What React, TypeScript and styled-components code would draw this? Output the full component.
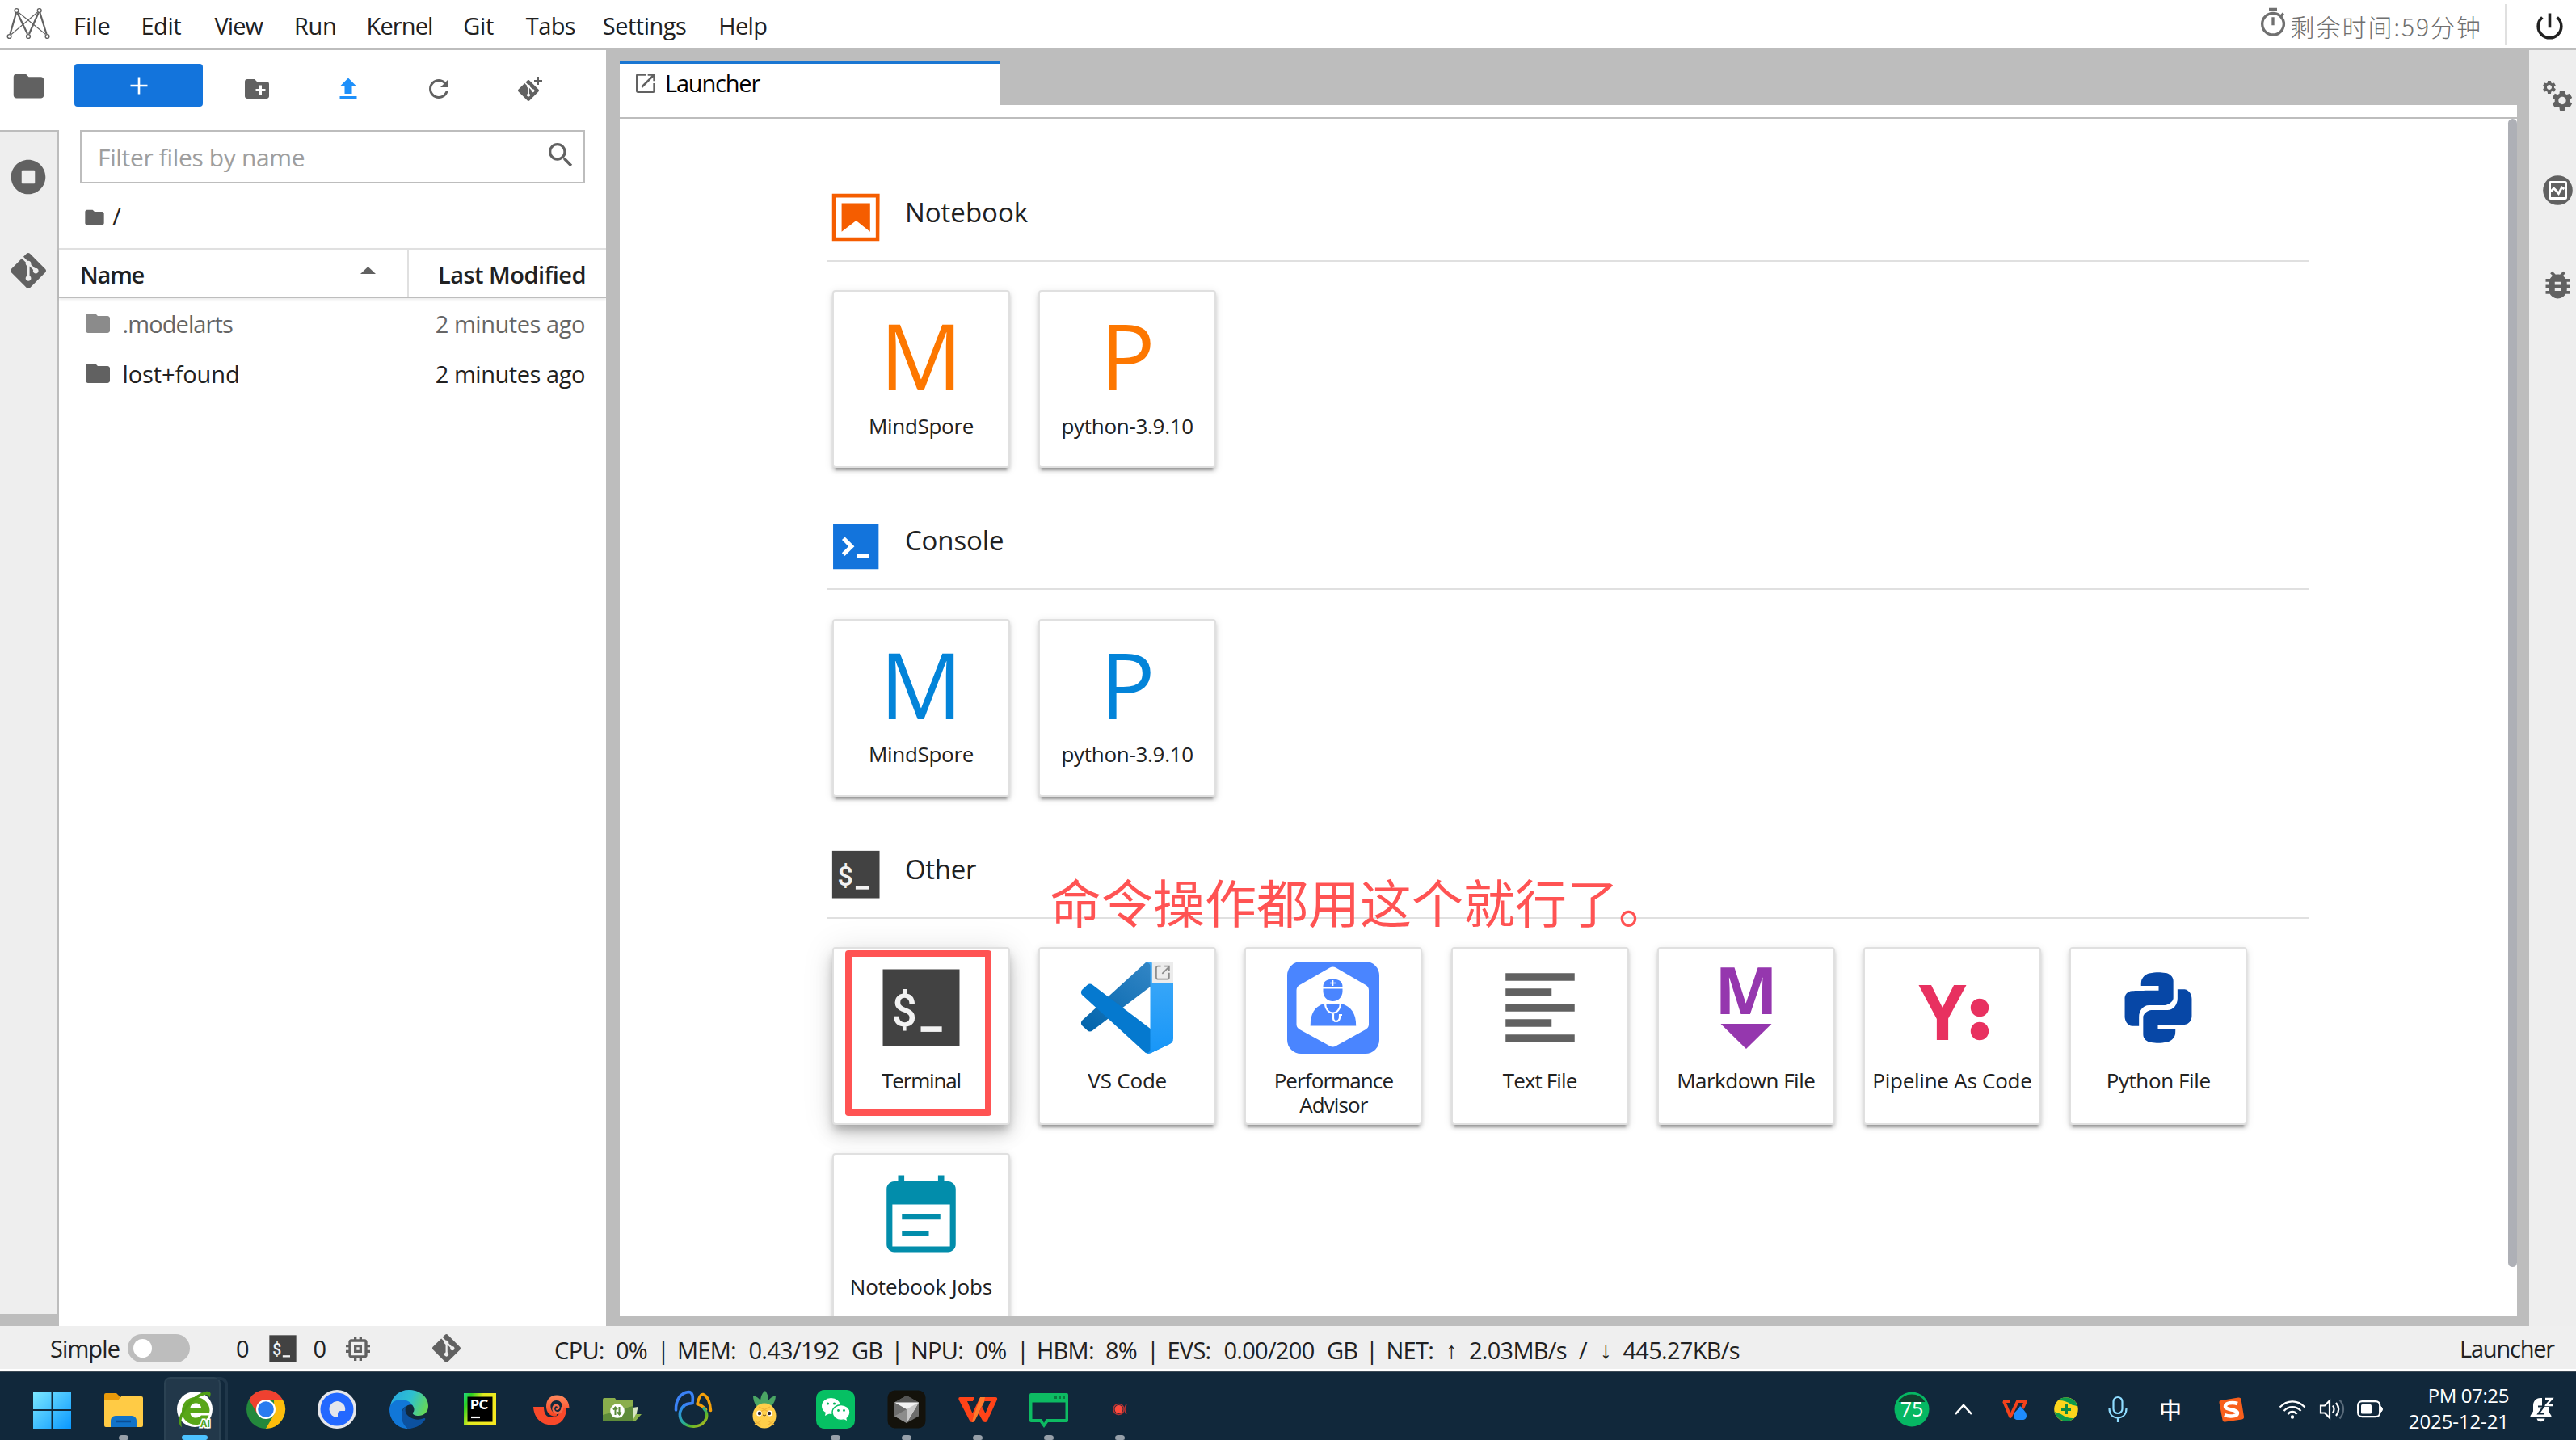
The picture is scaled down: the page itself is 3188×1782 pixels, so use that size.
import React from "react";
import styled, { createGlobalStyle, css } from "styled-components";
import {
  MdSearch,
  MdOutlineTimer,
  MdPowerSettingsNew,
  MdSettings,
  MdBugReport,
  MdMemory,
  MdOpenInNew,
} from "react-icons/md";
import { SiGit } from "react-icons/si";

const GREY = "#616161";
const LINE = "#bdbdbd";

const Global = createGlobalStyle`
  *, *::before, *::after { box-sizing: border-box; }
  body { margin: 0; background: #fff; }
  svg { display: block; flex: none; overflow: visible; }
`;

const Screen = styled.div`
  width: 3188px;
  height: 1782px;
  display: flex;
  flex-direction: column;
  overflow: hidden;
  background: #fff;
  color: #212121;
  font-family: "Open Sans", "Noto Sans CJK SC", sans-serif;
  font-size: 29px;
  line-height: 40px;
  white-space: nowrap;
`;

const Label = styled.span<{ $ls?: number }>`
  letter-spacing: ${(p) => p.$ls ?? 0}px;
`;

/* ---------- menu bar ---------- */

const MenuBar = styled.header`
  height: 62px;
  flex: none;
  display: flex;
  align-items: center;
  border-bottom: 2px solid ${LINE};
`;

const LogoBox = styled.div`
  width: 91px;
  height: 60px;
  flex: none;
`;

const MenuItem = styled.div<{ $w: number; $ls: number }>`
  width: ${(p) => p.$w}px;
  letter-spacing: ${(p) => p.$ls}px;
  padding-top: 3px;
`;

const TimeLeft = styled.div`
  margin-left: auto;
  display: flex;
  align-items: center;
  gap: 2px;
  color: #707070;
  font-family: "Noto Sans CJK SC", sans-serif;
  font-size: 30px;
  font-weight: 300;
  letter-spacing: 2px;
  svg {
    width: 40px;
    height: 40px;
    margin-top: -4px;
  }
  span {
    width: 240px;
    padding-top: 3px;
  }
`;

const PowerBox = styled.div`
  width: 88.5px;
  height: 51px;
  margin-left: 25px;
  padding: 6px 0 0 32px;
  border-left: 2px solid #e0e0e0;
  color: #212121;
  svg {
    width: 43px;
    height: 43px;
  }
`;

/* ---------- side bars ---------- */

const Work = styled.div`
  height: 1579px;
  flex: none;
  display: flex;
`;

const LeftBar = styled.nav`
  width: 73px;
  flex: none;
  display: flex;
  flex-direction: column;
  background: #eeeeee;
  color: ${GREY};
`;

const ActiveSideTab = styled.div`
  height: 99px;
  padding: 0 3px 11px 0;
  display: flex;
  align-items: center;
  justify-content: center;
  background: #fff;
`;

const SideTabs = styled.div`
  flex: 1;
  border-top: 2px solid ${LINE};
  border-right: 2px solid ${LINE};
`;

const SideSlot = styled.div`
  height: 116px;
  padding: 0 1px 4px 0;
  display: flex;
  align-items: center;
  justify-content: center;
`;

const SideFoot = styled.div`
  height: 15px;
  background: ${LINE};
`;

const RightBar = styled.nav`
  width: 58px;
  flex: none;
  background: #eeeeee;
  color: ${GREY};
  padding-left: 12px;
`;

const RightSlot = styled.div`
  height: 117px;
  padding-bottom: 4px;
  display: flex;
  align-items: center;
  justify-content: center;
`;

/* ---------- file browser ---------- */

const FilePanel = styled.aside`
  width: 677px;
  flex: none;
  background: #fff;
`;

const FileToolbar = styled.div`
  height: 99px;
  display: flex;
  padding: 17px 0 0 19px;
  color: ${GREY};
`;

const NewButton = styled.div`
  width: 159px;
  height: 53px;
  margin-right: 11px;
  border-radius: 4px;
  background: #1374dc;
  display: flex;
  align-items: center;
  justify-content: center;
`;

const ToolSlot = styled.div<{ $color?: string }>`
  width: 112.5px;
  height: 62px;
  display: flex;
  align-items: center;
  justify-content: center;
  color: ${(p) => p.$color ?? GREY};
`;

const FilterBox = styled.div`
  width: 625px;
  height: 66px;
  margin-left: 26px;
  padding: 0 8px 0 20px;
  border: 2px solid ${LINE};
  display: flex;
  align-items: center;
  justify-content: space-between;
  font-size: 30px;
  color: #9e9e9e;
  svg {
    width: 40px;
    height: 40px;
    color: ${GREY};
    margin-top: -5px;
  }
  span {
    padding-top: 2px;
  }
`;

const Crumbs = styled.div`
  height: 80px;
  padding: 2px 0 0 30px;
  display: flex;
  align-items: center;
  gap: 8px;
  color: ${GREY};
  svg {
    margin-top: 2px;
  }
  span {
    color: #212121;
  }
`;

const ListHead = styled.div`
  height: 62px;
  display: flex;
  border-top: 2px solid #e0e0e0;
  border-bottom: 2px solid ${LINE};
  box-shadow: 0 2px 3px rgba(0, 0, 0, 0.08);
  font-weight: 600;
`;

const NameHead = styled.div`
  width: 433px;
  padding: 4px 39px 0 26px;
  display: flex;
  align-items: center;
  justify-content: space-between;
  border-right: 2px solid #e0e0e0;
  svg {
    margin-top: -11px;
  }
`;

const DateHead = styled.div`
  flex: 1;
  padding: 4px 25px 0 0;
  display: flex;
  align-items: center;
  justify-content: flex-end;
`;

const FileRow = styled.div<{ $dim?: boolean }>`
  height: 62px;
  padding: 2px 26px 0 30px;
  display: flex;
  align-items: center;
  color: ${(p) => (p.$dim ? "#666" : "#212121")};
  svg {
    color: ${(p) => (p.$dim ? "#8b8b8b" : GREY)};
    margin: -2px 12.5px 0 0;
  }
  > :last-child {
    margin-left: auto;
  }
`;

/* ---------- main dock ---------- */

const Dock = styled.main`
  flex: 1;
  display: flex;
  flex-direction: column;
  padding: 13px 15px 13px 17px;
  background: ${LINE};
`;

const Tab = styled.div`
  width: 471px;
  height: 55px;
  flex: none;
  padding: 0 0 3px 16px;
  border-top: 4px solid #1976d2;
  background: #fff;
  color: #000;
  display: flex;
  align-items: center;
  gap: 8px;
  svg {
    width: 32px;
    height: 32px;
    margin-top: -1px;
    color: ${GREY};
  }
`;

const TabStrip = styled.div`
  height: 17px;
  flex: none;
  background: #fff;
  border-bottom: 2px solid ${LINE};
`;

const Body = styled.div`
  flex: 1;
  min-height: 0;
  display: flex;
  position: relative;
  overflow: hidden;
  background: #fff;
`;

const Sections = styled.div`
  width: 2337px;
  flex: none;
  padding: 76.5px 246px 0 257px;
`;

const ScrollThumb = styled.div`
  width: 11px;
  height: 1421px;
  border-radius: 6px;
  background: #aeb0b6;
`;

const Section = styled.section`
  margin-bottom: 51px;
`;

const SectionHead = styled.div`
  height: 100px;
  margin-bottom: 35.5px;
  padding-top: 10.5px;
  display: flex;
  gap: 25.5px;
  border-bottom: 2px solid #e0e0e0;
  font-size: 33px;
  span {
    padding-top: 8.5px;
  }
`;

const Cards = styled.div`
  display: flex;
  flex-wrap: wrap;
  gap: 35px 35.2px;
  padding-left: 6px;
`;

const Card = styled.div<{ $raised?: boolean }>`
  width: 220px;
  height: 220px;
  padding-top: 16px;
  display: flex;
  flex-direction: column;
  align-items: center;
  position: relative;
  border: 2px solid #e0e0e0;
  border-radius: 4px;
  background: #fff;
  ${(p) =>
    p.$raised
      ? css`
          box-shadow: 0 7px 11px -2px rgba(0, 0, 0, 0.24), 0 13px 22px rgba(0, 0, 0, 0.14), 0 2px 40px rgba(0, 0, 0, 0.1);
        `
      : css`
          box-shadow: 0 7px 2px -4px rgba(0, 0, 0, 0.22), 0 4px 4px rgba(0, 0, 0, 0.16), 0 2px 11px rgba(0, 0, 0, 0.1);
        `}
`;

const CardLabel = styled.div<{ $ls: number }>`
  margin-top: 17.5px;
  font-size: 26px;
  line-height: 30px;
  text-align: center;
  letter-spacing: ${(p) => p.$ls}px;
  white-space: pre;
`;

const Initial = styled.div<{ $color: string }>`
  height: 117px;
  font-size: 114px;
  line-height: 123px;
  color: ${(p) => p.$color};
`;

const Highlight = styled.div`
  position: absolute;
  left: 14px;
  top: 2px;
  width: 181px;
  height: 205px;
  border: 8px solid #ff5353;
  border-radius: 4px;
`;

const Annotation = styled.div`
  position: absolute;
  left: 532px;
  top: 935px;
  font-family: "Noto Sans CJK SC", sans-serif;
  font-size: 64px;
  line-height: 64px;
  color: #ff5353;
`;

/* ---------- status bar ---------- */

const Status = styled.footer`
  height: 57px;
  flex: none;
  display: flex;
  align-items: center;
  padding: 0 27px 0 62px;
  background: #efefef;
  border-bottom: 2px solid #3c4a55;
  box-shadow: inset 0 -2px 0 #fff;
  color: #212121;
`;

const Toggle = styled.div`
  width: 77px;
  height: 35px;
  margin: 0 57px 0 10px;
  padding: 6px 7px;
  border-radius: 18px;
  background: #bdbdbd;
  &::before {
    content: "";
    display: block;
    width: 23px;
    height: 23px;
    border-radius: 50%;
    background: #fff;
  }
`;

const StatusIcon = styled.div<{ $l: number; $r: number }>`
  margin: 0 ${(p) => p.$r}px 0 ${(p) => p.$l}px;
  color: ${GREY};
`;

const Metrics = styled.div`
  display: flex;
  padding-top: 4px;
`;

const Metric = styled.span<{ $w: number; $arrow?: boolean }>`
  width: ${(p) => p.$w}px;
  flex: none;
  letter-spacing: -0.7px;
  ${(p) =>
    p.$arrow &&
    css`
      font-family: "Liberation Sans", sans-serif;
    `}
`;

const StatusEnd = styled.span`
  margin-left: auto;
  letter-spacing: -1.2px;
`;

/* ---------- taskbar ---------- */

const Taskbar = styled.div`
  height: 84px;
  flex: none;
  display: flex;
  justify-content: space-between;
  padding: 0 3px 0 21px;
  background: #11283b;
  color: #fff;
`;

const Apps = styled.div`
  display: flex;
`;

const AppSlot = styled.div<{ $active?: boolean }>`
  width: 88.1px;
  height: 84px;
  flex: none;
  padding-top: 22px;
  display: flex;
  flex-direction: column;
  align-items: center;
  gap: 8px;
  position: relative;
  svg {
    width: 48px;
    height: 48px;
    position: relative;
  }
  ${(p) =>
    p.$active &&
    css`
      &::before,
      &::after {
        content: "";
        position: absolute;
        top: 6px;
        bottom: 0;
        border-radius: 8px 8px 0 0;
      }
      &::before {
        left: 6px;
        width: 70px;
        background: #22384a;
        border: 2px solid #2b4253;
        border-bottom: 0;
      }
      &::after {
        left: 72px;
        width: 13px;
        border: 4px solid #20374a;
        border-left: 0;
        border-bottom: 0;
        border-radius: 0 9px 0 0;
      }
    `}
`;

const Dot = styled.div<{ $active?: boolean }>`
  width: ${(p) => (p.$active ? 32 : 12)}px;
  height: 6px;
  border-radius: ${(p) => (p.$active ? "3px" : "5px 5px 3px 3px")};
  background: ${(p) => (p.$active ? "#4cc2ff" : "#97a0a9")};
  position: relative;
`;

const Tray = styled.div`
  display: flex;
`;

const TraySlot = styled.div<{ $w: number }>`
  width: ${(p) => p.$w}px;
  padding-top: 8px;
  display: flex;
  align-items: center;
  justify-content: center;
`;

const Ime = styled.span`
  font-family: "Noto Sans CJK SC", sans-serif;
  font-size: 28px;
  font-weight: 500;
`;

const Clock = styled.div`
  width: 137px;
  padding-top: 13px;
  display: flex;
  flex-direction: column;
  align-items: flex-end;
  font-size: 24px;
  line-height: 32px;
`;

/* ---------- icons ---------- */

const FolderIcon = ({ s }: { s: number }) => (
  <svg width={s} height={s} viewBox="0 0 24 24" fill="currentColor">
    <path d="M10 4H4c-1.1 0-1.99.9-1.99 2L2 18c0 1.1.9 2 2 2h16c1.1 0 2-.9 2-2V8c0-1.1-.9-2-2-2h-8l-2-2z" />
  </svg>
);

const TerminalIcon = ({ s }: { s: number }) => (
  <svg width={s} height={s} viewBox="0 0 24 24">
    <rect x="2" y="2" width="20" height="20" fill="#424242" />
    <text x="4.3" y="16.8" fontFamily="Roboto" fontWeight="500" fontSize="11.6" fill="#f2f2f2">$</text>
    <rect x="11.9" y="16.9" width="5.5" height="1.4" fill="#f2f2f2" />
  </svg>
);

const NotebookIcon = () => (
  <svg width="70.4" height="70.4" viewBox="0 0 22 22" fill="#f55d00">
    <path d="M18.7 3.3v15.4H3.3V3.3h15.4m1.5-1.5H1.8v18.3h18.3l.1-18.3z" />
    <path d="M16.5 16.5l-5.4-4.3-5.6 4.3v-11h11z" />
  </svg>
);

const ConsoleIcon = () => (
  <svg width="70.4" height="70.4" viewBox="0 0 200 200">
    <path fill="#1374dc" d="M20 19.8h160v159.9H20z" />
    <path fill="#fff" d="M105 127.3h40v12.8h-40zM51.1 77L74 99.9l-23.3 23.3 10.5 10.5 23.3-23.3L95 99.9 84.5 89.4 61.6 66.5z" />
  </svg>
);

const Logo = () => (
  <svg width="70" height="60" viewBox="0 0 70 60" fill="none" stroke="#616161">
    <path d="M12.5 42L20 16M21.5 16L34 42M36 42L47.5 16M49.5 16L57.5 42" strokeWidth="2.2" />
    <path d="M14 42.5L46.5 15M22.5 15L56.5 42.5" strokeWidth="1.1" />
    <g fill="#fff" strokeWidth="1.4">
      <circle cx="20.5" cy="13" r="2.4" />
      <circle cx="48.7" cy="13" r="2.4" />
      <circle cx="11.6" cy="45" r="2.4" />
      <circle cx="35" cy="45" r="2.4" />
      <circle cx="58.5" cy="45" r="2.4" />
    </g>
  </svg>
);

const VsCodeIcon = () => (
  <svg width="114" height="114" viewBox="0 0 100 100">
    <defs>
      <linearGradient id="vsBack" x1="0" y1="1" x2="1" y2="0">
        <stop offset="0" stopColor="#0063ab" />
        <stop offset="1" stopColor="#3a8bc9" />
      </linearGradient>
      <linearGradient id="vsFront" x1="0" y1="0" x2="0" y2="1">
        <stop offset="0" stopColor="#40aaf8" />
        <stop offset="1" stopColor="#1796f8" />
      </linearGradient>
    </defs>
    <path fill="url(#vsBack)" d="M96.4614 10.7962L75.8569 0.875542C73.4719 -0.272773 70.6217 0.211611 68.75 2.08333L1.29858 63.5832C-0.515693 65.2373 -0.513607 68.0937 1.30308 69.7452L6.81272 74.754C8.29793 76.1042 10.5347 76.2036 12.1338 74.9905L93.3609 13.3699C96.086 11.3026 100 13.2462 100 16.6667V16.4275C100 14.0265 98.6246 11.8378 96.4614 10.7962Z" />
    <path fill="#0579cf" d="M96.4614 89.2038L75.8569 99.1245C73.4719 100.273 70.6217 99.7884 68.75 97.9167L1.29858 36.4169C-0.515693 34.7627 -0.513607 31.9063 1.30308 30.2548L6.81272 25.246C8.29793 23.8958 10.5347 23.7964 12.1338 25.0095L93.3609 86.6301C96.086 88.6974 100 86.7538 100 83.3333V83.5725C100 85.9735 98.6246 88.1621 96.4614 89.2038Z" />
    <path fill="url(#vsFront)" d="M75.8578 99.1263C73.4721 100.274 70.6219 99.7885 68.75 97.9166C71.0564 100.223 75 98.5895 75 95.3278V4.67213C75 1.41039 71.0564 -0.223106 68.75 2.08329C70.6219 0.211402 73.4721 -0.273666 75.8578 0.873633L96.4587 10.7807C98.6234 11.8217 100 14.0112 100 16.4132V83.5871C100 85.9891 98.6234 88.1786 96.4586 89.2196L75.8578 99.1263Z" />
    <rect x="77" y="0" width="23" height="23" fill="#ececec" />
    <path d="M86.5 5h-3a2 2 0 0 0-2 2v10a2 2 0 0 0 2 2h10a2 2 0 0 0 2-2v-5M88 13l7-7M90.5 5h5v5" fill="none" stroke="#8a8a8a" strokeWidth="1.5" />
  </svg>
);

const AdvisorIcon = () => (
  <svg width="114" height="114" viewBox="0 0 114 114">
    <rect width="114" height="114" rx="17" fill="#4a85ff" />
    <path d="M56.5 14L93.5 35.5V77.5L56.5 98L19 77.5V35.5Z" fill="#fff" stroke="#fff" strokeWidth="15" strokeLinejoin="round" />
    <g fill="#4a85ff">
      <path d="M44.5 31c0-6 4-9.5 12-9.5s12 3.5 12 9.5z" />
      <path d="M44.5 33.5h24v3c0 8-6 12.5-12 12.5s-12-4.5-12-12.5z" />
      <path d="M28.7 79.5c0-15 5-24 17-27.5h21c13 3.5 18.5 12.5 18.5 27.5z" />
    </g>
    <path d="M56.5 23v7M53 26.5h7" stroke="#fff" strokeWidth="1.6" />
    <path d="M47 51c0 7 4 12.5 9.5 12.5S66 58 66 51M57 63.5v6c0 6 7 6 8 0v-3M64 66h4" fill="none" stroke="#fff" strokeWidth="2.2" />
  </svg>
);

const TextIcon = () => (
  <svg width="114" height="114" viewBox="0 0 24 24" fill={GREY}>
    <path d="M15 15H3v2h12v-2zm0-8H3v2h12V7zM3 13h18v-2H3v2zm0 8h18v-2H3v2zM3 3v2h18V3H3z" />
  </svg>
);

const MarkdownIcon = () => (
  <svg width="114" height="114" viewBox="0 0 114 114" fill="#9537ae">
    <text x="57" y="64.5" textAnchor="middle" fontFamily="Open Sans" fontWeight="700" fontSize="81" textLength="78" lengthAdjust="spacingAndGlyphs">M</text>
    <path d="M25.5 77h63L57 108z" />
  </svg>
);

const PipelineIcon = () => (
  <svg width="114" height="114" viewBox="0 0 114 114" fill="#e83160">
    <text x="15.5" y="97" fontFamily="Open Sans" fontWeight="700" fontSize="95" textLength="59" lengthAdjust="spacingAndGlyphs">Y</text>
    <circle cx="91" cy="57" r="11.2" />
    <circle cx="91" cy="86" r="11.2" />
  </svg>
);

const PythonIcon = () => (
  <svg width="114" height="114" viewBox="0 0 22 22" fill="#0747a6">
    <path d="M11.1 6.9V5.8H6.9c0-.5 0-1.3.2-1.6.4-.7.8-1.1 1.7-1.4 1.7-.3 2.5-.3 3.9-.1 1 .1 1.9.9 1.9 1.9v4.2c0 .5-.9 1.6-2 1.6H8.8c-1.5 0-2.4 1.4-2.4 2.8v2.2H4.7C3.5 15.1 3 14 3 13.1V9c-.1-1 .6-2 1.8-2 1.5-.1 6.3-.1 6.3-.1z" />
    <path d="M10.9 15.1v1.1h4.2c0 .5 0 1.3-.2 1.6-.4.7-.8 1.1-1.7 1.4-1.7.3-2.5.3-3.9.1-1-.1-1.9-.9-1.9-1.9v-4.2c0-.5.9-1.6 2-1.6h3.8c1.5 0 2.4-1.4 2.4-2.8V6.6h1.7C18.5 6.8 19 8 19 8.9V13c0 1-.7 2.1-1.9 2.1h-6.2z" />
  </svg>
);

const JobsIcon = () => (
  <svg width="114" height="114" viewBox="0 0 24 24" fill="#028dab">
    <path d="M19 3.6h-1V2h-1.6v1.6H7.6V2H6v1.6H5c-1.1 0-2 .9-2 2V20c0 1.1.9 2 2 2h14c1.1 0 2-.9 2-2V5.6c0-1.1-.9-2-2-2zm.5 16.9h-15V9.6h15z" />
    <path d="M7 12h10v1.5H7zM7 16.4h7v1.5H7z" />
  </svg>
);

const MonitorIcon = () => (
  <svg width="37" height="37" viewBox="0 0 37 37">
    <circle cx="18.5" cy="18.5" r="18.3" fill={GREY} />
    <rect x="8.5" y="8.5" width="20" height="20" rx="1" fill="none" stroke="#fff" strokeWidth="3" />
    <path d="M10 20l3.5-4 3 3 3 3.5 4-7.5 3 2" fill="none" stroke="#fff" strokeWidth="2.8" />
  </svg>
);

const GearsIcon = () => (
  <svg width="37" height="37" viewBox="0 0 37 37">
    <MdSettings x={-2} y={-2} size={20} />
    <MdSettings x={8.5} y={9} size={31} />
  </svg>
);

/* ---------- taskbar icons ---------- */

const WindowsIcon = () => (
  <svg viewBox="0 0 48 48">
    <defs>
      <linearGradient id="win" x1="0" y1="0" x2="1" y2="1">
        <stop offset="0" stopColor="#7ce8ff" />
        <stop offset="1" stopColor="#0a98ff" />
      </linearGradient>
    </defs>
    <path fill="url(#win)" d="M0 2h22.5v22H0zM24.5 2H47v22H24.5zM0 26h22.5v22H0zM24.5 26H47v22H24.5z" />
  </svg>
);

const ExplorerIcon = () => (
  <svg viewBox="0 0 48 48">
    <path d="M0 6a2 2 0 0 1 2-2h13l5 5v8H0z" fill="#e99a0a" />
    <path d="M0 13h17l4-5h25a2 2 0 0 1 2 2v34a2 2 0 0 1-2 2H2a2 2 0 0 1-2-2z" fill="#ffcb45" />
    <path d="M8 46V38a6 6 0 0 1 6-6h20a6 6 0 0 1 6 6v8z" fill="#1173c9" />
    <path d="M15 39h18" stroke="#0a4e94" strokeWidth="2.5" />
  </svg>
);

const Browser360Icon = () => (
  <svg viewBox="0 0 48 48">
    <circle cx="24" cy="24" r="22" fill="#fff" />
    <path fillRule="evenodd" d="M42 28.5H18.5c.5 4 3 6 7 6 3 0 5-1 6.5-3h9.5c-2.5 7-8.5 11.5-16 11.5C15.5 43 8 36 8 26S15.5 9 25 9s17.5 7.5 17.5 16.5zM18.5 22H32c-.5-3.5-3-5.5-6.5-5.5s-6.500 2-7 5.500z" fill="#58a618" />
    <path d="M5 42C2 34 12 16 26 7 34 2 42 0 43.5 4c.5 2-.5 4-1.5 6 0-4-3-5-8-3C20 12 4 32 8 46c-1.500-1-2.500-2.500-3-4z" fill="#4f9e14" />
    <text x="31" y="46" fontFamily="Open Sans" fontWeight="700" fontSize="12" fill="#58a618" stroke="#fff" strokeWidth="3" paintOrder="stroke">AI</text>
  </svg>
);

const ChromeIcon = () => (
  <svg viewBox="0 0 48 48">
    <circle cx="24" cy="24" r="24" fill="#23883c" />
    <path d="M3.2 12A24 24 0 0 1 44.8 12H24L13.6 30z" fill="#ef4130" />
    <path d="M44.8 12A24 24 0 0 1 24 48L34.4 30 34 12z" fill="#fdbd0b" />
    <circle cx="24" cy="24" r="12" fill="#fff" />
    <circle cx="24" cy="24" r="9.8" fill="#2a7cf0" />
  </svg>
);

const QuarkIcon = () => (
  <svg viewBox="0 0 48 48">
    <circle cx="24" cy="24" r="24" fill="#e6e6ea" />
    <circle cx="24" cy="24" r="20.5" fill="#2368ff" />
    <path d="M24 14a10 10 0 1 0 1 20v-4a4 4 0 0 1 4-4h5A10 10 0 0 0 24 14z" fill="#e4e6ec" />
  </svg>
);

const EdgeIcon = () => (
  <svg viewBox="0 0 48 48">
    <defs>
      <linearGradient id="edgeTop" x1="0" y1="0.3" x2="1" y2="0.6">
        <stop offset="0" stopColor="#27a9e0" />
        <stop offset="0.5" stopColor="#2ec0d0" />
        <stop offset="1" stopColor="#66d855" />
      </linearGradient>
    </defs>
    <path d="M1 20C3 8 12 0 24 0c14 0 24 9 24 20 0 8-6 12-12 12-5 0-8-2-7-4 2-2 2-5 0-8-2-4-8-6-14-6-7 0-12 3-14 6z" fill="url(#edgeTop)" />
    <path d="M0 24c0-7 6-12 14-12 8 0 14 4 15 9-3-3-9-2-12 2-3 6-2 15 6 25C10 48 0 38 0 24z" fill="#1177d8" />
    <path d="M17 24c2-4 6-5 9-4-2 2-2 5-1 8 2 7 10 9 18 7 1.5 0 1.5 1 1 2-5 7-13 11-21 11-8-6-10-16-6-24z" fill="#0c519f" />
    <path d="M29 21c0-3-3-3.5-6-2-5 3-4 10 0 13 5 5 14 6 19 3-6 1-13-1-14-6 0-2 1.5-3 1-8z" fill="#11283b" />
  </svg>
);

const PyCharmIcon = () => (
  <svg viewBox="0 0 48 48">
    <defs>
      <linearGradient id="pc" x1="0" y1="0" x2="1" y2="0.5">
        <stop offset="0" stopColor="#21d789" />
        <stop offset="0.2" stopColor="#2bd020" />
        <stop offset="0.5" stopColor="#e0ea20" />
        <stop offset="1" stopColor="#f5e820" />
      </linearGradient>
    </defs>
    <rect x="4" y="4" width="40" height="40" fill="url(#pc)" />
    <rect x="8.5" y="8.5" width="31" height="31" fill="#000" />
    <text x="12" y="24" fontFamily="Lato" fontWeight="900" fontSize="16" fill="#fff" textLength="22" lengthAdjust="spacingAndGlyphs">PC</text>
    <path d="M13 34h11" stroke="#fff" strokeWidth="2.2" />
  </svg>
);

const NautilusIcon = () => (
  <svg viewBox="0 0 48 48">
    <defs>
      <linearGradient id="nau" x1="0.5" y1="0" x2="0.5" y2="1">
        <stop offset="0" stopColor="#ff8a5e" />
        <stop offset="1" stopColor="#f6401f" />
      </linearGradient>
    </defs>
    <path d="M2 21h13c0 8 3 13 9 13 7 0 12-4 13-12h6c0 13-7 21.5-18 21.5C12 43.5 3 35 2 21z" fill="#f8492a" />
    <path d="M46.5 22H38c0-6-3-9-7.5-9-5 0-7.5 4-7 8.5.5 5 4 7.5 8 7l-1 4c-7 1-12.5-4-12.5-12C18 12 23 6.5 31 6.5c9 0 15 6 15.5 15.5z" fill="url(#nau)" />
    <path d="M38 21c0 5-3 8-6.5 7.5-4-.5-5.5-4-4.5-7s5-3.5 6-1-1.5 3.5-2.5 2.5" fill="none" stroke="#f4694a" strokeWidth="2.8" />
  </svg>
);

const FolderSyncIcon = () => (
  <svg viewBox="0 0 48 48">
    <path d="M37 22l6.5-1-3.5 18h-3z" fill="#d8e6c4" />
    <path d="M37 38l4-8h7l-8 9z" fill="#8ab24a" />
    <path d="M0 12a2 2 0 0 1 2-2h13l2 3h20v26H0z" fill="#8aae4c" />
    <path d="M0 31L37 20v19H0z" fill="#5f8c3a" />
    <circle cx="18" cy="26" r="8.8" fill="#fff" />
    <path d="M15.5 31V22M13 24.5l2.5-3 2.5 3M20.5 21v9M18 27.5l2.5 3 2.5-3" stroke="#5a8a3a" strokeWidth="2" fill="none" />
  </svg>
);

const NavIcon = () => (
  <svg viewBox="0 0 48 48" fill="none" strokeWidth="3.6" strokeLinecap="round" strokeLinejoin="round">
    <defs>
      <linearGradient id="navBase" x1="0" y1="0" x2="1" y2="1">
        <stop offset="0" stopColor="#2f86ff" />
        <stop offset="0.5" stopColor="#28b090" />
        <stop offset="0.7" stopColor="#5cb82a" />
        <stop offset="1" stopColor="#d0b81c" />
      </linearGradient>
    </defs>
    <path d="M2.5 25C2 13 8 3.5 18 2.5c5 0 6 5 5 14-6 .5-8.5 1-11 4" stroke="#3b82f6" />
    <path d="M29 17.5c2-9 4-12.5 7-12 6 2 9 11 9.5 20M29 17.5c4 1 8 4 10.5 7" stroke="#f5a00a" />
    <path d="M12 20c-6 6-6 14-1 20 7 7 21 7 27-1 5-7 2-13-1-16" stroke="url(#navBase)" />
  </svg>
);

const PineappleIcon = () => (
  <svg viewBox="0 0 48 48">
    <path d="M14 20c-3-5-4-9-4-13 4 1 7 3 9 6 1-6 2-9 6-12 3 4 4 7 4 12 2-3 5-5 9-6 0 5-2 9-5 13z" fill="#4aa564" />
    <ellipse cx="24" cy="32" rx="14.5" ry="15.5" fill="#ffcf4a" />
    <path d="M17 21l12 6M31 21l-12 6M12 38l8 6M20 38l-8 5M28 44l8-6M28 38l8 5" stroke="#f0b43a" strokeWidth="1.3" />
    <ellipse cx="17.5" cy="29" rx="3.3" ry="3.6" fill="#fff" />
    <ellipse cx="30.5" cy="29" rx="3.3" ry="3.6" fill="#fff" />
    <circle cx="18" cy="29" r="2.2" fill="#2c2430" />
    <circle cx="30" cy="29" r="2.2" fill="#2c2430" />
    <path d="M22 31q2 2 4 0" stroke="#6a4a20" fill="none" />
  </svg>
);

const WeChatIcon = () => (
  <svg viewBox="0 0 48 48">
    <rect width="48" height="48" rx="10" fill="#06c063" />
    <ellipse cx="18.5" cy="20" rx="11.5" ry="10" fill="#fff" />
    <path d="M12 27l-1 5 6-3z" fill="#fff" />
    <ellipse cx="31" cy="28" rx="11" ry="9.5" fill="#fff" stroke="#06c063" strokeWidth="1.5" />
    <path d="M34 36l4 2-1-5z" fill="#fff" />
    <g fill="#06b45c">
      <circle cx="14.5" cy="17" r="1.6" />
      <circle cx="22.5" cy="17" r="1.6" />
      <circle cx="27.5" cy="25.5" r="1.4" />
      <circle cx="34.5" cy="25.5" r="1.4" />
    </g>
  </svg>
);

const CursorIcon = () => (
  <svg viewBox="0 0 48 48">
    <rect x="0.5" y="0.5" width="47" height="47" rx="9" fill="#14120b" />
    <path d="M24 7l15 8.5v17L24 41 9 32.5v-17z" fill="#6d6d6c" />
    <path d="M9 32.5L24 24v17z" fill="#8c8c8b" />
    <path d="M24 7l15 8.5H9z" fill="#555554" />
    <path d="M9 15.5h30L24 41V24z" fill="#f2f2f2" />
    <path d="M39 15.5L24 24v17z" fill="#c8c8c8" />
  </svg>
);

const WpsIcon = () => (
  <svg viewBox="0 0 48 48">
    <path d="M2 9h18l-2 5h-7l6.5 15L26 11c1-1.5 2-2 4-2h4L20 38c-1 2.5-5 2.5-6 0L.5 12C0 10 .5 9 2 9z" fill="#ff4318" />
    <path d="M27 9h8L21 37c-1 2-2 3-4 3l2-8z" fill="#ff7a2c" />
    <path d="M33 9h13c2 0 2.5 1.5 2 3L36 38c-1 2.5-4.5 2.5-6 0l-5-9 4-9 4.5 9L40 14h-8z" fill="#ff4318" />
  </svg>
);

const ScreenChatIcon = () => (
  <svg viewBox="0 0 48 48">
    <path d="M2 4h44a2 2 0 0 1 2 2v32a2 2 0 0 1-2 2H23l-5 7-5-7H2a2 2 0 0 1-2-2V6a2 2 0 0 1 2-2z" fill="#0dbb62" />
    <path d="M3.5 15.5h41V36H20.5l-2.5 5-2.5-5h-12z" fill="#11283b" />
    <path d="M31 9.5h3M36 9.5h3M41 9.5h3" stroke="#0a7a40" strokeWidth="3" />
  </svg>
);

const RecordIcon = () => (
  <svg viewBox="0 0 48 48">
    <circle cx="22.5" cy="24" r="6.5" fill="none" stroke="#b43232" strokeWidth="1.5" />
    <circle cx="22.5" cy="24" r="5" fill="#ff4a3c" />
    <path d="M32 18q-4 6 0 12" stroke="#b43232" strokeWidth="1.5" fill="none" />
  </svg>
);

/* ---------- tray icons ---------- */

const BadgeIcon = () => (
  <svg width="44" height="44" viewBox="0 0 44 44">
    <circle cx="22" cy="22" r="21.5" fill="#06b763" />
    <path d="M5.5 13a19 19 0 0 1 33 0z" fill="#12402f" />
    <text x="22" y="31" textAnchor="middle" fontFamily="Open Sans" fontSize="25" fill="#fff">75</text>
  </svg>
);

const ChevronIcon = () => (
  <svg width="22" height="14" viewBox="0 0 22 14" fill="none" stroke="#fff" strokeWidth="2.6">
    <path d="M1 13L11 2l10 11" />
  </svg>
);

const WpsCloudIcon = () => (
  <svg width="32" height="26" viewBox="0 0 32 26" fill="none">
    <path d="M2 3h9M3 3l8 19L20 3h10L26 12" stroke="#f4421c" strokeWidth="4" strokeLinejoin="round" />
    <path d="M23 9c5 5 8 8 8 12 0 3-2 5-5 5h-6c-3 0-5-2-5-5 0-5 5-6 8-12z" fill="#1e8cff" />
  </svg>
);

const ShieldIcon = () => (
  <svg width="30" height="30" viewBox="0 0 30 30">
    <circle cx="15" cy="15" r="14.8" fill="#fbd51c" />
    <path d="M5 4A15 15 0 0 1 29.5 13c-2-4-6-2-9-4.5C16 5 10 3.5 5 4zM25 26A15 15 0 0 1 .5 17c2 4 6 2 9 4.5C14 25 20 26.5 25 26z" fill="#0d9a4b" />
    <path d="M15 9v12M9 15h12" stroke="#0d8a43" strokeWidth="4" />
  </svg>
);

const MicIcon = () => (
  <svg width="24" height="33" viewBox="0 0 24 33" fill="none" stroke="#8fdcff" strokeWidth="2.2">
    <rect x="6.5" y="1" width="11" height="20" rx="5.5" />
    <path d="M1.5 15c0 7 4 11.5 10.5 11.5S22.5 22 22.5 15M12 26.5V32" />
  </svg>
);

const SogouIcon = () => (
  <svg width="33" height="31" viewBox="0 0 33 31">
    <path d="M4 4L25 .5c2-.3 3 .5 3.5 2L32 24c.3 2-.5 3-2.5 3.5L9 30.5c-2 .3-3-.5-3.5-2.5L1.5 7C1.2 5 2 4.3 4 4z" fill="#f85f1c" />
    <path d="M24 8c-6-2-15-1-15 3.5S24 15 24 19.5 14 24.5 8 22" stroke="#fff" strokeWidth="4.5" fill="none" />
  </svg>
);

const WifiIcon = () => (
  <svg width="34" height="25" viewBox="0 0 34 25" fill="none" stroke="#fff" strokeWidth="2.3">
    <path d="M1.5 9.5c9-9.5 22-9.5 31 0M6.5 14c6-6.5 15-6.5 21 0M11.5 18c3-4 8-4 11 0" />
    <circle cx="17" cy="21.5" r="2.2" fill="#fff" stroke="none" />
  </svg>
);

const SpeakerIcon = () => (
  <svg width="30" height="28" viewBox="0 0 30 28" fill="none" stroke="#fff" strokeWidth="2.2">
    <path d="M1 9.5h5l6-6v21l-6-6H1zM16 9.5c2 3 2 6 0 9M20 6c4 5 4 11 0 16" />
    <path d="M24.5 2.5c6 7 6 16 0 23" stroke="#5a6b7a" />
  </svg>
);

const BatteryIcon = () => (
  <svg width="34" height="22" viewBox="0 0 34 22">
    <rect x="1.2" y="1.2" width="27" height="19" rx="5" fill="none" stroke="#fff" strokeWidth="2.3" />
    <rect x="5" y="5" width="13" height="11.5" rx="1.5" fill="#fff" />
    <path d="M29.5 7.5q4 3.5 0 7z" fill="#fff" stroke="#fff" />
  </svg>
);

const BellIcon = () => (
  <svg width="28" height="31" viewBox="0 0 28 31" fill="#fff">
    <path d="M13 1C7 1 4 5.5 4 10v7.5L.5 23v1.5h26V23L23 17.5V12H15V1zM8.5 26.5h10c-1 5-9 5-10 0z" />
    <path d="M19 2h8l-7 8h8" fill="none" stroke="#fff" strokeWidth="2.4" />
    <path d="M10 11.5h7l-6.5 9h7" fill="none" stroke="#11283b" strokeWidth="2.2" />
  </svg>
);

/* ---------- data ---------- */

const menu: [string, number, number][] = [
  ["File", 83.4, 0],
  ["Edit", 91, -0.4],
  ["View", 98.5, -0.9],
  ["Run", 89.7, -0.3],
  ["Kernel", 119.7, -0.9],
  ["Git", 77.5, -0.3],
  ["Tabs", 95, -0.6],
  ["Settings", 143.5, -0.5],
  ["Help", 80, -0.7],
];

type Item = { label: string; ls: number; icon: React.ReactNode; raised?: boolean };

const kernels = (color: string): Item[] => [
  { label: "MindSpore", ls: -0.3, icon: <Initial $color={color}>M</Initial> },
  { label: "python-3.9.10", ls: -0.3, icon: <Initial $color={color}>P</Initial> },
];

const sections: { title: string; ls: number; icon: React.ReactNode; items: Item[] }[] = [
  { title: "Notebook", ls: 0, icon: <NotebookIcon />, items: kernels("#fd7700") },
  { title: "Console", ls: -0.1, icon: <ConsoleIcon />, items: kernels("#0384d9") },
  {
    title: "Other",
    ls: -0.3,
    icon: <TerminalIcon s={70.4} />,
    items: [
      { label: "Terminal", ls: -1.2, icon: <TerminalIcon s={114} />, raised: true },
      { label: "VS Code", ls: -0.2, icon: <VsCodeIcon /> },
      { label: "Performance\nAdvisor", ls: -0.9, icon: <AdvisorIcon /> },
      { label: "Text File", ls: -0.9, icon: <TextIcon /> },
      { label: "Markdown File", ls: -0.5, icon: <MarkdownIcon /> },
      { label: "Pipeline As Code", ls: -0.25, icon: <PipelineIcon /> },
      { label: "Python File", ls: -0.4, icon: <PythonIcon /> },
      { label: "Notebook Jobs", ls: -0.1, icon: <JobsIcon /> },
    ],
  },
];

const metrics: [string, number][] = [
  ["CPU:", 75.8],
  ["0%", 51],
  ["|", 25],
  ["MEM:", 88.5],
  ["0.43/192", 127.5],
  ["GB", 48.5],
  ["|", 24.5],
  ["NPU:", 79.6],
  ["0%", 51.4],
  ["|", 25],
  ["HBM:", 85],
  ["8%", 51],
  ["|", 25.5],
  ["EVS:", 70],
  ["0.00/200", 127.5],
  ["GB", 48],
  ["|", 25.5],
  ["NET:", 73.5],
  ["↑", 29],
  ["2.03MB/s", 136],
  ["/", 26],
  ["↓", 28.5],
  ["445.27KB/s", 150],
];

const apps: { icon: React.ReactNode; state?: "open" | "active" }[] = [
  { icon: <WindowsIcon /> },
  { icon: <ExplorerIcon />, state: "open" },
  { icon: <Browser360Icon />, state: "active" },
  { icon: <ChromeIcon /> },
  { icon: <QuarkIcon /> },
  { icon: <EdgeIcon /> },
  { icon: <PyCharmIcon /> },
  { icon: <NautilusIcon /> },
  { icon: <FolderSyncIcon /> },
  { icon: <NavIcon /> },
  { icon: <PineappleIcon /> },
  { icon: <WeChatIcon />, state: "open" },
  { icon: <CursorIcon />, state: "open" },
  { icon: <WpsIcon />, state: "open" },
  { icon: <ScreenChatIcon />, state: "open" },
  { icon: <RecordIcon />, state: "open" },
];

const tray: [React.ReactNode, number][] = [
  [<BadgeIcon />, 64],
  [<ChevronIcon />, 63],
  [<WpsCloudIcon />, 64],
  [<ShieldIcon />, 64],
  [<MicIcon />, 64],
  [<Ime>中</Ime>, 66],
  [<SogouIcon />, 84],
  [<WifiIcon />, 68],
  [<SpeakerIcon />, 29],
  [<BatteryIcon />, 68],
];

export default function App() {
  return (
    <Screen>
      <Global />
      <MenuBar>
        <LogoBox>
          <Logo />
        </LogoBox>
        {menu.map(([name, w, ls]) => (
          <MenuItem key={name} $w={w} $ls={ls}>
            {name}
          </MenuItem>
        ))}
        <TimeLeft>
          <MdOutlineTimer />
          <span>剩余时间:59分钟</span>
        </TimeLeft>
        <PowerBox>
          <MdPowerSettingsNew />
        </PowerBox>
      </MenuBar>

      <Work>
        <LeftBar>
          <ActiveSideTab>
            <FolderIcon s={45} />
          </ActiveSideTab>
          <SideTabs>
            <SideSlot>
              <svg width="44" height="44" viewBox="0 0 512 512" fill="currentColor">
                <path d="M256 8C119 8 8 119 8 256s111 248 248 248 248-111 248-248S393 8 256 8zm96 328c0 8.8-7.2 16-16 16H176c-8.8 0-16-7.2-16-16V176c0-8.8 7.2-16 16-16h160c8.8 0 16 7.2 16 16v160z" />
              </svg>
            </SideSlot>
            <SideSlot>
              <SiGit size={44} />
            </SideSlot>
          </SideTabs>
          <SideFoot />
        </LeftBar>

        <FilePanel>
          <FileToolbar>
            <NewButton>
              <svg width="22" height="22" viewBox="0 0 22 22" stroke="#fff" strokeWidth="2.6">
                <path d="M11 .5v21M.5 11h21" />
              </svg>
            </NewButton>
            <ToolSlot>
              <svg width="36" height="36" viewBox="0 0 24 24" fill="currentColor">
                <path d="M20 6h-8l-2-2H4c-1.11 0-1.99.89-1.99 2L2 18c0 1.11.89 2 2 2h16c1.11 0 2-.89 2-2V8c0-1.11-.89-2-2-2zm-1 8h-3v3h-2v-3h-3v-2h3V9h2v3h3v2z" />
              </svg>
            </ToolSlot>
            <ToolSlot $color="#1e90fa">
              <svg width="36" height="36" viewBox="0 0 24 24" fill="currentColor">
                <path d="M5 20h14v-2H5v2zm0-10h4v6h6v-6h4l-7-7-7 7z" />
              </svg>
            </ToolSlot>
            <ToolSlot>
              <svg width="36" height="36" viewBox="0 0 18 18" fill="currentColor">
                <path d="M9 13.5c-2.49 0-4.5-2.01-4.5-4.5S6.51 4.5 9 4.5c1.24 0 2.36.52 3.17 1.33L10 8h5V3l-1.76 1.76C12.15 3.68 10.66 3 9 3 5.69 3 3.01 5.69 3.01 9S5.69 15 9 15c2.97 0 5.43-2.16 5.9-5h-1.52c-.46 2-2.24 3.5-4.38 3.5z" />
              </svg>
            </ToolSlot>
            <ToolSlot>
              <svg width="30" height="30" viewBox="0 0 30 30">
                <SiGit x={0} y={4} size={26} />
                <path d="M25 0v10M20 5h10" stroke="currentColor" strokeWidth="2" />
              </svg>
            </ToolSlot>
          </FileToolbar>
          <FilterBox>
            <Label $ls={-0.35}>Filter files by name</Label>
            <MdSearch />
          </FilterBox>
          <Crumbs>
            <FolderIcon s={28} />
            <Label>/</Label>
          </Crumbs>
          <ListHead>
            <NameHead>
              <Label $ls={-1.2}>Name</Label>
              <svg width="19" height="9" viewBox="0 0 19 9" fill={GREY}>
                <path d="M0 9L9.5 0 19 9z" />
              </svg>
            </NameHead>
            <DateHead>
              <Label $ls={-0.5}>Last Modified</Label>
            </DateHead>
          </ListHead>
          <FileRow $dim>
            <FolderIcon s={36} />
            <Label $ls={-0.9}>.modelarts</Label>
            <Label $ls={-0.45}>2 minutes ago</Label>
          </FileRow>
          <FileRow>
            <FolderIcon s={36} />
            <Label $ls={-0.1}>lost+found</Label>
            <Label $ls={-0.45}>2 minutes ago</Label>
          </FileRow>
        </FilePanel>

        <Dock>
          <Tab>
            <MdOpenInNew />
            <Label $ls={-1.2}>Launcher</Label>
          </Tab>
          <TabStrip />
          <Body>
            <Sections>
              {sections.map((s) => (
                <Section key={s.title}>
                  <SectionHead>
                    {s.icon}
                    <Label $ls={s.ls}>{s.title}</Label>
                  </SectionHead>
                  <Cards>
                    {s.items.map((it) => (
                      <Card key={it.label} $raised={it.raised}>
                        {it.icon}
                        <CardLabel $ls={it.ls}>{it.label}</CardLabel>
                        {it.raised && <Highlight />}
                      </Card>
                    ))}
                  </Cards>
                </Section>
              ))}
            </Sections>
            <ScrollThumb />
            <Annotation>命令操作都用这个就行了。</Annotation>
          </Body>
        </Dock>

        <RightBar>
          <RightSlot>
            <GearsIcon />
          </RightSlot>
          <RightSlot>
            <MonitorIcon />
          </RightSlot>
          <RightSlot>
            <MdBugReport size={45} />
          </RightSlot>
        </RightBar>
      </Work>

      <Status>
        <Label $ls={-0.9}>Simple</Label>
        <Toggle />
        <Label>0</Label>
        <StatusIcon $l={21.5} $r={17.3}>
          <TerminalIcon s={40} />
        </StatusIcon>
        <Label>0</Label>
        <StatusIcon $l={19.4} $r={71.2}>
          <MdMemory size={40} />
        </StatusIcon>
        <StatusIcon $l={0} $r={116.5}>
          <SiGit size={35} />
        </StatusIcon>
        <Metrics>
          {metrics.map(([t, w], i) => (
            <Metric key={i} $w={w} $arrow={t === "↑" || t === "↓"}>
              {t}
            </Metric>
          ))}
        </Metrics>
        <StatusEnd>Launcher</StatusEnd>
      </Status>

      <Taskbar>
        <Apps>
          {apps.map((a, i) => (
            <AppSlot key={i} $active={a.state === "active"}>
              {a.icon}
              {a.state && <Dot $active={a.state === "active"} />}
            </AppSlot>
          ))}
        </Apps>
        <Tray>
          {tray.map(([icon, w], i) => (
            <TraySlot key={i} $w={w}>
              {icon}
            </TraySlot>
          ))}
          <Clock>
            <Label $ls={-0.4}>PM 07:25</Label>
            <Label $ls={-0.1}>2025-12-21</Label>
          </Clock>
          <TraySlot $w={80}>
            <BellIcon />
          </TraySlot>
        </Tray>
      </Taskbar>
    </Screen>
  );
}
